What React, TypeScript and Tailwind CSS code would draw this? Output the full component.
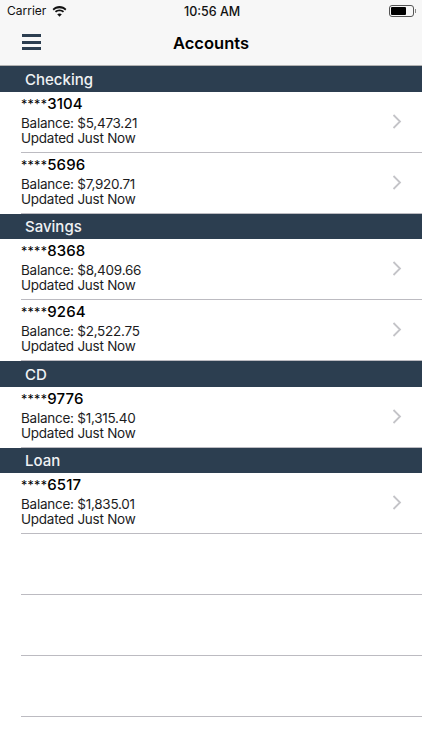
import React from "react";

const sections = [
  { title: "Checking", rows: [["3104", "$5,473.21"], ["5696", "$7,920.71"]] },
  { title: "Savings", rows: [["8368", "$8,409.66"], ["9264", "$2,522.75"]] },
  { title: "CD", rows: [["9776", "$1,315.40"]] },
  { title: "Loan", rows: [["6517", "$1,835.01"]] },
];

function Row({ num, bal }: { num: string; bal: string }) {
  return (
    <div className="h-[61px] pl-[21px] flex">
      <div className="flex-1 flex items-start border-b border-[#bcbbc1]">
        <div className="flex-1 pt-[2px]">
          <div className="text-[15px] leading-[20px] font-medium text-black tracking-[0.1px]">
            <span className="text-[12.5px] font-normal tracking-[0.3px]">****</span>
            {num}
          </div>
          <div className="text-[13.5px] leading-[15px] mt-[1px] text-[#1c1c1e] tracking-[-0.25px]">Balance: {bal}</div>
          <div className="text-[13.5px] leading-[15px] text-[#1c1c1e] tracking-[-0.25px]">Updated Just Now</div>
        </div>
        <svg width="10" height="15" viewBox="0 0 10 15" className="mr-[20px] mt-[22px]" fill="none">
          <path d="M1.5 1 L8 7.5 L1.5 14" stroke="#c4c4c8" strokeWidth="1.8" />
        </svg>
      </div>
    </div>
  );
}

export default function App() {
  return (
    <div className="w-[422px] h-[750px] overflow-hidden bg-white font-['Inter','Liberation_Sans',sans-serif]">
      <div className="bg-[#f7f7f7] h-[66px] border-b border-[#b2b2b2]">
        <div className="h-[22px] relative flex items-center justify-between pl-[7px] pr-[6px] text-[12px] text-[#111]">
          <div className="flex items-center gap-[6px]">
            <span>Carrier</span>
            <svg width="15" height="11" viewBox="0 0 15 11" fill="#111">
              <path d="M7.5 2.2c2.2 0 4.2.8 5.7 2.2l1.2-1.3C12.6 1.2 10.2 0 7.5 0S2.4 1.2.6 3.100l1.2 1.300C3.300 3 5.300 2.200 7.500 2.200z" />
              <path d="M7.500 5.300c1.300 0 2.500.5 3.400 1.300l1.200-1.300C10.900 4.100 9.300 3.400 7.500 3.400s-3.400.7-4.600 1.900l1.200 1.300c.9-.8 2.100-1.300 3.400-1.300z" />
              <path d="M7.500 10.800l2.300-2.500c-.6-.6-1.400-.9-2.300-.9s-1.700.3-2.300.9z" />
            </svg>
          </div>
          <span className="absolute left-[184px] top-[4px] text-[12.5px] leading-[15px] font-medium">10:56 AM</span>
          <div className="flex items-center">
            <div className="w-[25px] h-[12px] rounded-[3px] border border-[#555] p-[1px] flex">
              <div className="w-[15px] bg-black rounded-[1px]" />
            </div>
            <div className="w-[1.5px] h-[4px] bg-[#888] ml-[1px]" />
          </div>
        </div>
        <div className="h-[43px] relative flex items-center justify-center">
          <div className="absolute left-[22px] top-[12px] w-[19px] flex flex-col gap-[3.5px]">
            <div className="h-[3px] bg-[#2c3e50]" />
            <div className="h-[3px] bg-[#2c3e50]" />
            <div className="h-[3px] bg-[#2c3e50]" />
          </div>
          <span className="text-[16.5px] font-semibold text-black">Accounts</span>
        </div>
      </div>
      {sections.map((s) => (
        <div key={s.title}>
          <div className="h-[25.5px] bg-[#2c3e50] pl-[25px] pt-[2px] flex items-center text-[15px] font-medium text-[#f0f2f4]">
            {s.title}
          </div>
          {s.rows.map((r) => (
            <Row key={r[0]} num={r[0]} bal={r[1]} />
          ))}
        </div>
      ))}
      {[0, 1, 2].map((i) => (
        <div key={i} className="h-[61px] ml-[21px] border-b border-[#bcbbc1]" />
      ))}
    </div>
  );
}
